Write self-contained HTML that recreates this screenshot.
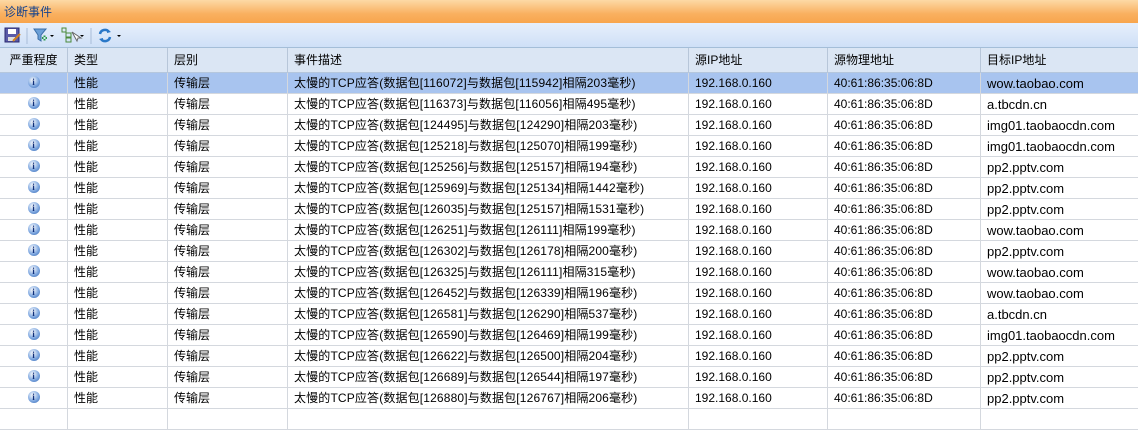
<!DOCTYPE html><html><head><meta charset="utf-8"><style>
*{margin:0;padding:0;box-sizing:border-box}
body{width:1138px;height:413px;overflow:hidden;background:#fff;font-family:"Liberation Sans","Noto Sans CJK SC",sans-serif;font-size:12px;color:#000}
.title{height:23px;background:linear-gradient(#fdd9a6,#f9b060 60%,#f8a54c);color:#15428b;padding:3px 4px;font-size:12px}
.tb{height:25px;background:linear-gradient(#e6effb,#cfe0f7);border-bottom:1px solid #a4bed8;position:relative}
.row{position:absolute;left:0;width:1138px;height:21px;border-bottom:1px solid #d4d8de}
.row div,.hdr div{position:absolute;top:0;height:100%;border-right:1px solid #d4d8de;padding-left:6px;line-height:21px;white-space:nowrap;overflow:hidden}
.hdr{position:absolute;top:48px;left:0;width:1138px;height:25px;background:#dbe6f4;border-bottom:1px solid #b5c7dd}
.hdr div{border-right:1px solid #b7c6d9;line-height:24px}
.sel{background:#a8c4ef}
.c0{left:0;width:68px;text-align:center;padding-left:0!important}
.c1{left:68px;width:100px}.c2{left:168px;width:120px}.c3{left:288px;width:401px}.c4{left:689px;width:139px}.c5{left:828px;width:153px}.c6{left:981px;width:157px;border-right:none!important}
.row .c3{letter-spacing:0.15px}
.row .c6{font-size:13px}
.ic{display:inline-block;width:12px;height:12px;border-radius:50%;background:radial-gradient(circle at 40% 35%,#fff,#7fa8e0 55%,#2f63b0);color:#0f2f7a;font:bold 9px/12px "Liberation Serif",serif;text-align:center;vertical-align:middle;margin-top:-3px}
</style></head><body>
<div class="title">诊断事件</div>
<div class="tb">
<svg width="140" height="25" style="position:absolute;left:0;top:0">
<rect x="5" y="5" width="14" height="14" fill="#5a5aa8" stroke="#2b2b70"/><rect x="8" y="6" width="8" height="5" fill="#fff"/><rect x="8" y="14" width="7" height="4" fill="#ddd"/><path d="M13 18 L20 11" stroke="#d08020" stroke-width="2"/>
<line x1="27" y1="5" x2="27" y2="21" stroke="#a8bcd8"/>
<path d="M34 6 H46 L41 12 V18 L38 16 V12 Z" fill="#6ba0d8" stroke="#3a6ea8"/><path d="M42 14 h5 v2 h-5z M43.5 12.5 v5 h2 v-5z" fill="#2a9a4a"/><path d="M50 12 h4 l-2 2z" fill="#000"/>
<rect x="62" y="5" width="4" height="4" fill="none" stroke="#4a8a3a"/><rect x="66" y="10" width="5" height="4" fill="none" stroke="#4a8a3a"/><rect x="66" y="15" width="5" height="4" fill="none" stroke="#4a8a3a"/><path d="M72 9 l5 9 l1-3 l3 0z" fill="#fff" stroke="#666"/><path d="M80 12 h4 l-2 2z" fill="#000"/>
<line x1="91" y1="5" x2="91" y2="21" stroke="#a8bcd8"/>
<path d="M100 11 a5 5 0 0 1 9 -2 M110 14 a5 5 0 0 1 -9 2" stroke="#2a78c8" stroke-width="2.5" fill="none"/><path d="M107 6 l4 3 l-4 1z M103 19 l-4 -3 l4 -1z" fill="#2a78c8"/><path d="M117 12 h4 l-2 2z" fill="#000"/>
</svg></div>
<div class="hdr"><div class="c0" style="padding-left:0">严重程度</div><div class="c1">类型</div><div class="c2">层别</div><div class="c3">事件描述</div><div class="c4">源IP地址</div><div class="c5">源物理地址</div><div class="c6">目标IP地址</div></div>
<div id="rows"></div>
<script>
var d=[["116072","115942","203","wow.taobao.com"],["116373","116056","495","a.tbcdn.cn"],["124495","124290","203","img01.taobaocdn.com"],["125218","125070","199","img01.taobaocdn.com"],["125256","125157","194","pp2.pptv.com"],["125969","125134","1442","pp2.pptv.com"],["126035","125157","1531","pp2.pptv.com"],["126251","126111","199","wow.taobao.com"],["126302","126178","200","pp2.pptv.com"],["126325","126111","315","wow.taobao.com"],["126452","126339","196","wow.taobao.com"],["126581","126290","537","a.tbcdn.cn"],["126590","126469","199","img01.taobaocdn.com"],["126622","126500","204","pp2.pptv.com"],["126689","126544","197","pp2.pptv.com"],["126880","126767","206","pp2.pptv.com"]];
var h="";d.forEach(function(r,i){h+='<div class="row'+(i==0?' sel':'')+'" style="top:'+(73+i*21)+'px"><div class="c0"><span class="ic">i</span></div><div class="c1">性能</div><div class="c2">传输层</div><div class="c3">太慢的TCP应答(数据包['+r[0]+']与数据包['+r[1]+']相隔'+r[2]+'毫秒)</div><div class="c4">192.168.0.160</div><div class="c5">40:61:86:35:06:8D</div><div class="c6">'+r[3]+'</div></div>';});
h+='<div class="row" style="top:409px"><div class="c0"></div><div class="c1"></div><div class="c2"></div><div class="c3"></div><div class="c4"></div><div class="c5"></div><div class="c6"></div></div>';
document.getElementById("rows").innerHTML=h;
</script>
</body></html>
